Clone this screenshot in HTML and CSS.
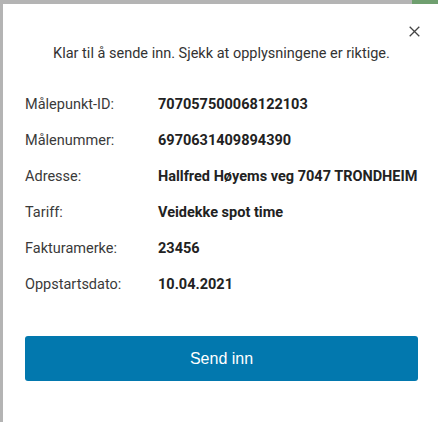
FILE: index.html
```html
<!DOCTYPE html>
<html lang="no">
<head>
<meta charset="utf-8">
<link rel="stylesheet" href="styles.css">
</head>
<body>
<div class="topbar"><div class="topbar-green"></div></div>
<div class="frame">
  <div class="close-row">
    <svg class="close" width="11" height="11" viewBox="0 0 11 11"><path d="M0.7 0.7 L10.3 10.3 M10.3 0.7 L0.7 10.3" stroke="#444" stroke-width="1.3" fill="none"/></svg>
  </div>
  <p class="intro">Klar til å sende inn. Sjekk at opplysningene er riktige.</p>
  <dl class="details">
    <div class="row"><dt>Målepunkt-ID:</dt><dd>707057500068122103</dd></div>
    <div class="row"><dt>Målenummer:</dt><dd>6970631409894390</dd></div>
    <div class="row"><dt>Adresse:</dt><dd>Hallfred Høyems veg 7047 TRONDHEIM</dd></div>
    <div class="row"><dt>Tariff:</dt><dd>Veidekke spot time</dd></div>
    <div class="row"><dt>Fakturamerke:</dt><dd>23456</dd></div>
    <div class="row"><dt>Oppstartsdato:</dt><dd>10.04.2021</dd></div>
  </dl>
  <button class="submit">Send inn</button>
</div>
</body>
</html>
```
FILE: styles.css
```css
html, body { margin: 0; padding: 0; background: #fff; }
body { font-family: Roboto, "Liberation Sans", Arial, sans-serif; color: #333; width: 438px; height: 422px; overflow: hidden; }
.topbar { height: 4px; background: #b4b4b4; display: flex; justify-content: flex-end; }
.topbar-green { width: 26px; background: #6f9f6f; }
.frame { border-left: 3px solid #b4b4b4; height: 418px; box-sizing: border-box; padding: 0 20px 0 22px; }
.close-row { display: flex; justify-content: flex-end; padding-top: 22px; height: 11px; margin-right: -2px; }
.close { display: block; }
.intro { margin: 8px 0 0 0; text-align: center; font-size: 14.5px; line-height: 18px; color: #333; }
.details { margin: 33px 0 0 0; }
.row { display: flex; height: 36px; align-items: flex-start; font-size: 14.5px; line-height: 18px; }
dt { width: 133px; color: #3a3a3a; }
dd { margin: 0; font-weight: bold; color: #222; }
.submit { display: block; width: 393px; height: 45px; margin-top: 24px; background: #0278ae; color: #fff; border: none; border-radius: 3px; font-family: "Liberation Sans", Arial, sans-serif; font-size: 16px; }
```
